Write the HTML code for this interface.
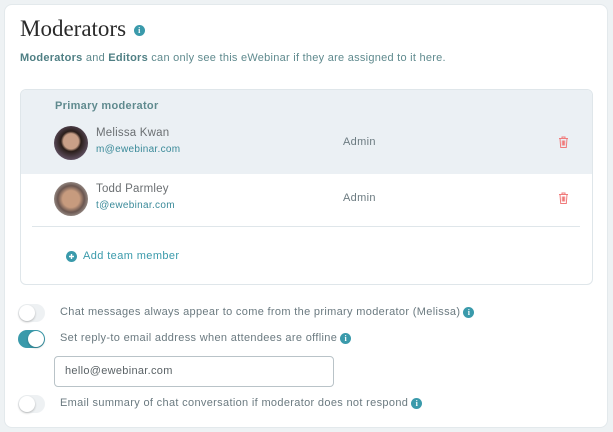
<!DOCTYPE html>
<html><head><style>
*{margin:0;padding:0;box-sizing:border-box}
body{width:613px;height:432px;background:#eef2f4;font-family:"Liberation Sans",sans-serif;position:relative;overflow:hidden}
.card{position:absolute;left:4px;top:4px;width:604px;height:424px;background:#fff;border-radius:8px;border:1px solid #e3e9ec}
.abs{position:absolute;white-space:nowrap}
.info{display:inline-block;width:11px;height:11px;border-radius:50%;background:#3a9aab;color:#fff;font-size:8px;font-weight:bold;text-align:center;line-height:11px;vertical-align:middle;font-family:"Liberation Serif",serif;letter-spacing:0;margin-left:3px}
.t{font-size:11px;color:#6b7a80;letter-spacing:0.33px}
.av{position:absolute;width:34px;height:34px;border-radius:50%}
.tog{position:absolute;left:18px;width:27px;height:18px;border-radius:9px;background:#eef1f3}
.tog::after{content:"";position:absolute;top:1px;width:16px;height:16px;border-radius:50%;background:#fff;box-shadow:0 1px 2px rgba(0,0,0,.25);left:1px}
.tog.on{background:#3a9aab}.tog.on::after{left:10px}
</style></head><body>
<div class="card"></div>
<div class="abs" style="left:20px;top:16px;font-family:'Liberation Serif',serif;font-size:23px;color:#2a2a2a">Moderators <span class="info" style="margin-left:2px">i</span></div>
<div class="abs" style="left:20px;top:52px;font-size:11px;color:#5f8a8e;letter-spacing:0.26px"><b style="color:#4f7f84">Moderators</b> and <b style="color:#4f7f84">Editors</b> can only see this eWebinar if they are assigned to it here.</div>
<div class="abs" style="left:20px;top:89px;width:573px;height:196px;border:1px solid #dfe6ea;border-radius:6px;overflow:hidden">
 <div style="height:84px;background:#ebf0f4"></div>
</div>
<div class="abs" style="left:55px;top:100px;font-size:11px;font-weight:bold;color:#5f8a8e;letter-spacing:0.3px">Primary moderator</div>
<div class="av" style="left:54px;top:126px;background:radial-gradient(circle at 50% 45%,#c9a088 0 30%,#2a1e1a 40%,#6b5a70 80%)"></div>
<div class="abs" style="left:96px;top:127px;font-size:11.5px;color:#6b6f72;letter-spacing:0.2px">Melissa Kwan</div>
<div class="abs" style="left:96px;top:144px;font-size:10px;color:#3a8a99;letter-spacing:0.3px">m@ewebinar.com</div>
<div class="abs t" style="left:343px;top:136px">Admin</div>
<svg class="abs" style="left:558px;top:136px" width="11" height="12" viewBox="0 0 11 12"><path d="M1 2.5h9M4 2.5V1h3v1.5M2 2.5l.7 9h5.6l.7-9M4.3 4.5v5M5.5 4.5v5M6.7 4.5v5" fill="none" stroke="#f07a7a" stroke-width="1"/></svg>
<div class="av" style="left:54px;top:182px;background:radial-gradient(circle at 50% 50%,#c79b7e 0 35%,#6a5650 55%,#a9a19b 80%)"></div>
<div class="abs" style="left:96px;top:183px;font-size:11.5px;color:#6b6f72;letter-spacing:0.2px">Todd Parmley</div>
<div class="abs" style="left:96px;top:200px;font-size:10px;color:#3a8a99;letter-spacing:0.3px">t@ewebinar.com</div>
<div class="abs t" style="left:343px;top:192px">Admin</div>
<svg class="abs" style="left:558px;top:192px" width="11" height="12" viewBox="0 0 11 12"><path d="M1 2.5h9M4 2.5V1h3v1.5M2 2.5l.7 9h5.6l.7-9M4.3 4.5v5M5.5 4.5v5M6.7 4.5v5" fill="none" stroke="#f07a7a" stroke-width="1"/></svg>
<div class="abs" style="left:32px;top:226px;width:548px;height:1px;background:#dfe6ea"></div>
<div class="abs" style="left:66px;top:251px;width:11px;height:11px;border-radius:50%;background:#3a9aab"></div>
<svg class="abs" style="left:66px;top:251px" width="11" height="11"><path d="M5.5 3v5M3 5.5h5" stroke="#fff" stroke-width="1.4"/></svg>
<div class="abs" style="left:83px;top:250px;font-size:11px;color:#3a9aab;letter-spacing:0.4px">Add team member</div>
<div class="tog" style="top:304px"></div>
<div class="abs t" style="left:60px;top:306px">Chat messages always appear to come from the primary moderator (Melissa)<span class="info">i</span></div>
<div class="tog on" style="top:330px"></div>
<div class="abs t" style="left:60px;top:332px">Set reply-to email address when attendees are offline<span class="info">i</span></div>
<div class="abs" style="left:54px;top:356px;width:280px;height:31px;border:1px solid #b9c3c8;border-radius:4px;font-size:11px;color:#5a6266;padding:8px 0 0 10px;letter-spacing:0.3px">hello@ewebinar.com</div>
<div class="tog" style="top:395px"></div>
<div class="abs t" style="left:60px;top:397px">Email summary of chat conversation if moderator does not respond<span class="info">i</span></div>
</body></html>
